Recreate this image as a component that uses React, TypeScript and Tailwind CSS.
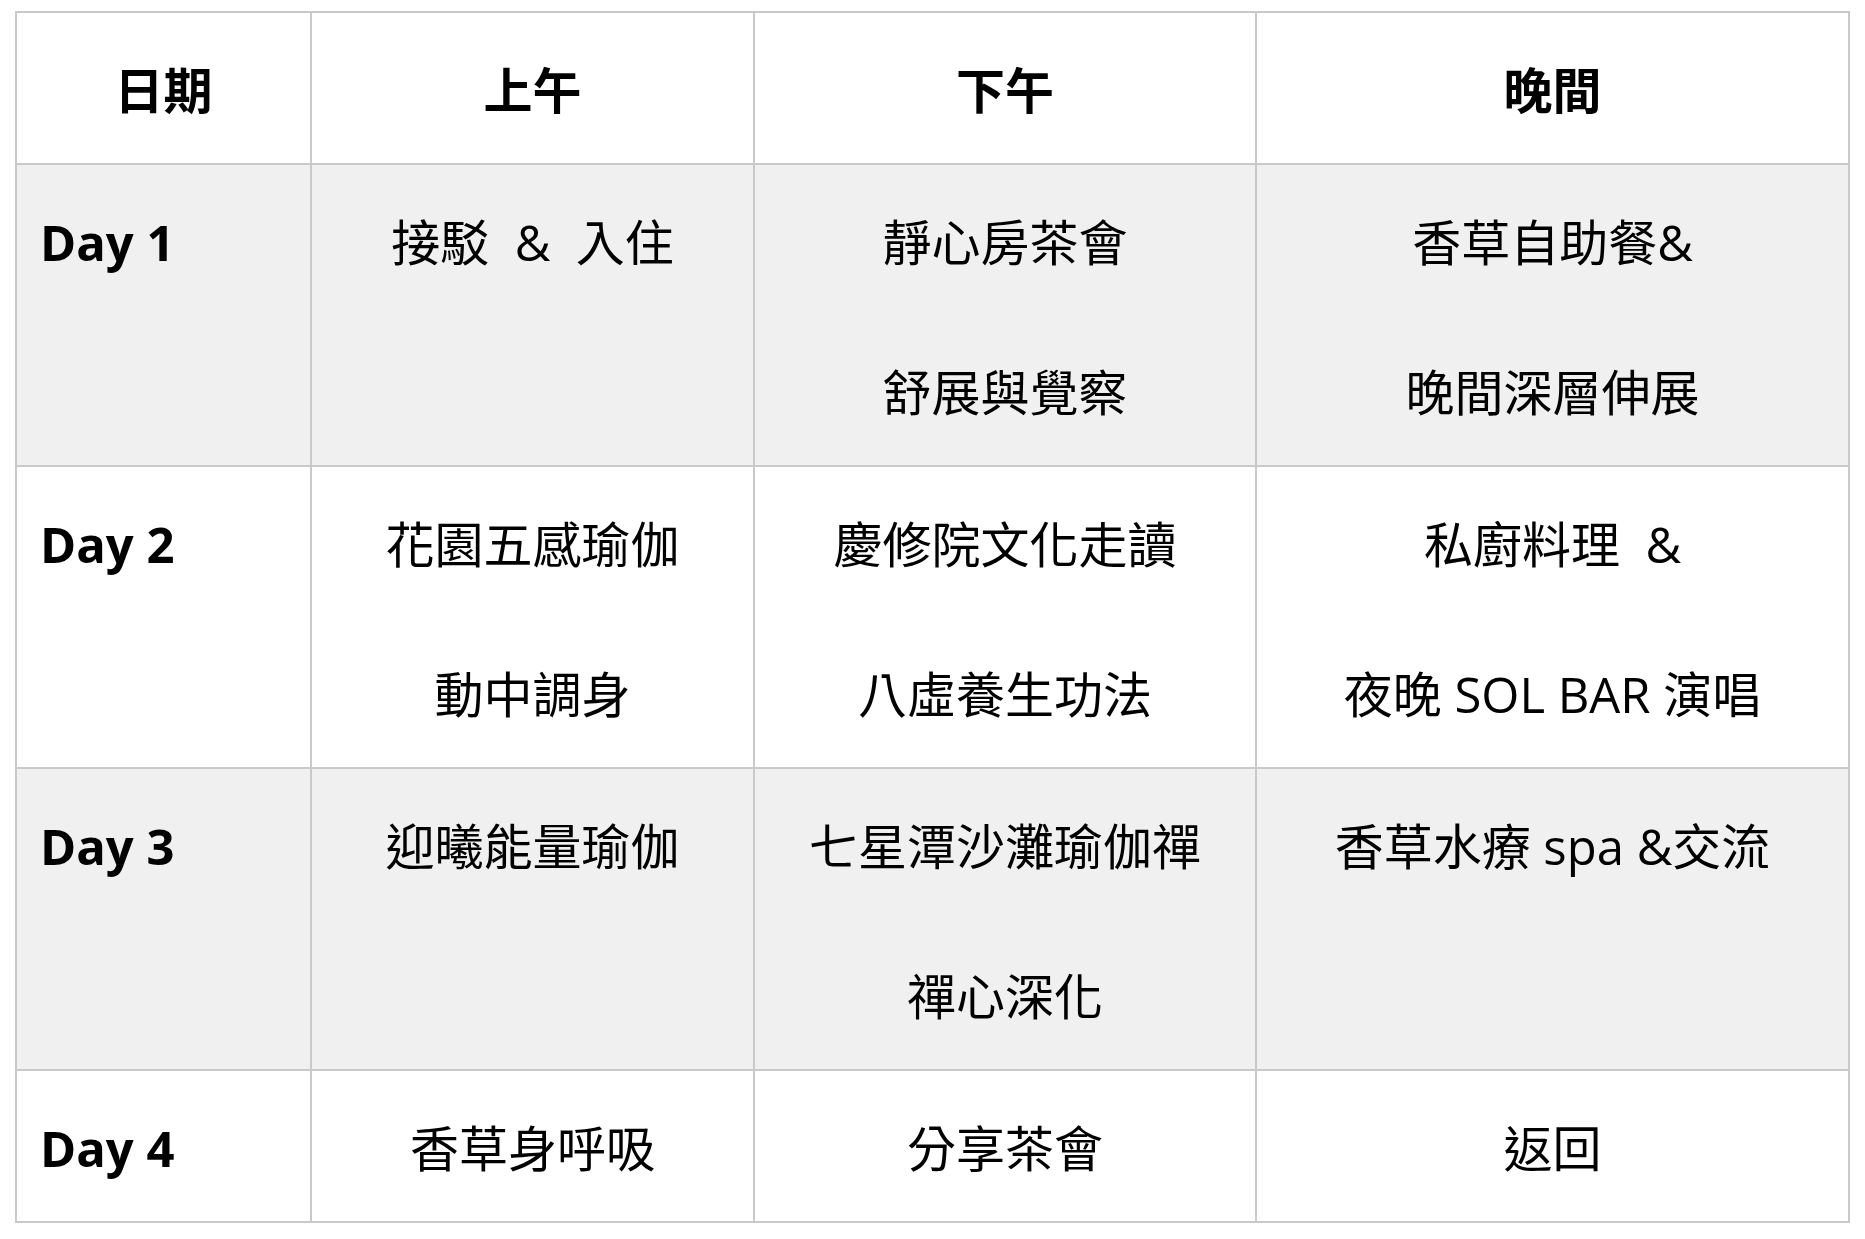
import React from "react";

type Row = { day: string; cells: string[][]; gray: boolean };

const rows: Row[] = [
  {
    day: "Day 1",
    gray: true,
    cells: [["接駁  &  入住"], ["靜心房茶會", "舒展與覺察"], ["香草自助餐&", "晚間深層伸展"]],
  },
  {
    day: "Day 2",
    gray: false,
    cells: [["花園五感瑜伽", "動中調身"], ["慶修院文化走讀", "八虛養生功法"], ["私廚料理  &", "夜晚 SOL BAR 演唱"]],
  },
  {
    day: "Day 3",
    gray: true,
    cells: [["迎曦能量瑜伽"], ["七星潭沙灘瑜伽禪", "禪心深化"], ["香草水療 spa &交流"]],
  },
  {
    day: "Day 4",
    gray: false,
    cells: [["香草身呼吸"], ["分享茶會"], ["返回"]],
  },
];

const headers = ["日期", "上午", "下午", "晚間"];

export default function App() {
  return (
    <div className="min-h-screen bg-white pl-[15px] pt-[11px] text-black [font-family:'Open_Sans','Noto_Sans_CJK_TC',sans-serif]">
      <table className="table-fixed border-collapse w-[1833px] text-[49px] leading-[150px]">
        <colgroup>
          <col className="w-[295px]" />
          <col className="w-[443px]" />
          <col className="w-[502px]" />
          <col className="w-[593px]" />
        </colgroup>
        <thead>
          <tr className="bg-white">
            {headers.map((h) => (
              <th
                key={h}
                className="border-2 border-[#c9c9c9] p-0 text-center align-top font-bold"
              >
                <div className="relative top-[2px]">{h}</div>
              </th>
            ))}
          </tr>
        </thead>
        <tbody>
          {rows.map((r) => (
            <tr key={r.day} className={r.gray ? "bg-[#f0f0f0]" : "bg-white"}>
              <td className="border-2 border-[#c9c9c9] p-0 pl-[23px] text-left align-top font-bold">
                <div className="relative top-[2px]">{r.day}</div>
              </td>
              {r.cells.map((lines, i) => (
                <td
                  key={i}
                  className="border-2 border-[#c9c9c9] p-0 text-center align-top font-normal"
                >
                  <div className="relative top-[2px]">
                    {lines.map((l, j) => (
                      <div key={j} className="whitespace-pre">
                        {l}
                      </div>
                    ))}
                  </div>
                </td>
              ))}
            </tr>
          ))}
        </tbody>
      </table>
    </div>
  );
}
